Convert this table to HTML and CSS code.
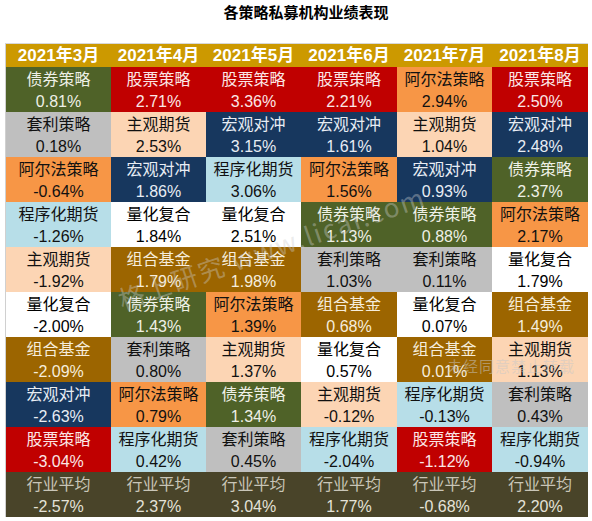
FILE: index.html
```html
<!DOCTYPE html>
<html>
<head>
    <meta charset="UTF-8">
    <title>各策略私募机构业绩表现</title>
    <link rel="stylesheet" href="styles.css">
</head>
<body>
    <div class="page">
        <h1 class="title">各策略私募机构业绩表现</h1>

        <div class="board">
            <!-- header -->
            <div class="head">2021年3月</div>
            <div class="head">2021年4月</div>
            <div class="head">2021年5月</div>
            <div class="head">2021年6月</div>
            <div class="head">2021年7月</div>
            <div class="head">2021年8月</div>

            <!-- row 1 -->
            <div class="cell bond"><span>债券策略</span><span>0.81%</span></div>
            <div class="cell stock"><span>股票策略</span><span>2.71%</span></div>
            <div class="cell stock"><span>股票策略</span><span>3.36%</span></div>
            <div class="cell stock"><span>股票策略</span><span>2.21%</span></div>
            <div class="cell alpha"><span>阿尔法策略</span><span>2.94%</span></div>
            <div class="cell stock"><span>股票策略</span><span>2.50%</span></div>

            <!-- row 2 -->
            <div class="cell arb"><span>套利策略</span><span>0.18%</span></div>
            <div class="cell subj"><span>主观期货</span><span>2.53%</span></div>
            <div class="cell macro"><span>宏观对冲</span><span>3.15%</span></div>
            <div class="cell macro"><span>宏观对冲</span><span>1.61%</span></div>
            <div class="cell subj"><span>主观期货</span><span>1.04%</span></div>
            <div class="cell macro"><span>宏观对冲</span><span>2.48%</span></div>

            <!-- row 3 -->
            <div class="cell alpha"><span>阿尔法策略</span><span>-0.64%</span></div>
            <div class="cell macro"><span>宏观对冲</span><span>1.86%</span></div>
            <div class="cell cta"><span>程序化期货</span><span>3.06%</span></div>
            <div class="cell alpha"><span>阿尔法策略</span><span>1.56%</span></div>
            <div class="cell macro"><span>宏观对冲</span><span>0.93%</span></div>
            <div class="cell bond"><span>债券策略</span><span>2.37%</span></div>

            <!-- row 4 -->
            <div class="cell cta"><span>程序化期货</span><span>-1.26%</span></div>
            <div class="cell quant"><span>量化复合</span><span>1.84%</span></div>
            <div class="cell quant"><span>量化复合</span><span>2.51%</span></div>
            <div class="cell bond"><span>债券策略</span><span>1.13%</span></div>
            <div class="cell bond"><span>债券策略</span><span>0.88%</span></div>
            <div class="cell alpha"><span>阿尔法策略</span><span>2.17%</span></div>

            <!-- row 5 -->
            <div class="cell subj"><span>主观期货</span><span>-1.92%</span></div>
            <div class="cell fof"><span>组合基金</span><span>1.79%</span></div>
            <div class="cell fof"><span>组合基金</span><span>1.98%</span></div>
            <div class="cell arb"><span>套利策略</span><span>1.03%</span></div>
            <div class="cell arb"><span>套利策略</span><span>0.11%</span></div>
            <div class="cell quant"><span>量化复合</span><span>1.79%</span></div>

            <!-- row 6 -->
            <div class="cell quant"><span>量化复合</span><span>-2.00%</span></div>
            <div class="cell bond"><span>债券策略</span><span>1.43%</span></div>
            <div class="cell alpha"><span>阿尔法策略</span><span>1.39%</span></div>
            <div class="cell fof"><span>组合基金</span><span>0.68%</span></div>
            <div class="cell quant"><span>量化复合</span><span>0.07%</span></div>
            <div class="cell fof"><span>组合基金</span><span>1.49%</span></div>

            <!-- row 7 -->
            <div class="cell fof"><span>组合基金</span><span>-2.09%</span></div>
            <div class="cell arb"><span>套利策略</span><span>0.80%</span></div>
            <div class="cell subj"><span>主观期货</span><span>1.37%</span></div>
            <div class="cell quant"><span>量化复合</span><span>0.57%</span></div>
            <div class="cell fof"><span>组合基金</span><span>0.01%</span></div>
            <div class="cell subj"><span>主观期货</span><span>1.13%</span></div>

            <!-- row 8 -->
            <div class="cell macro"><span>宏观对冲</span><span>-2.63%</span></div>
            <div class="cell alpha"><span>阿尔法策略</span><span>0.79%</span></div>
            <div class="cell bond"><span>债券策略</span><span>1.34%</span></div>
            <div class="cell subj"><span>主观期货</span><span>-0.12%</span></div>
            <div class="cell cta"><span>程序化期货</span><span>-0.13%</span></div>
            <div class="cell arb"><span>套利策略</span><span>0.43%</span></div>

            <!-- row 9 -->
            <div class="cell stock"><span>股票策略</span><span>-3.04%</span></div>
            <div class="cell cta"><span>程序化期货</span><span>0.42%</span></div>
            <div class="cell arb"><span>套利策略</span><span>0.45%</span></div>
            <div class="cell cta"><span>程序化期货</span><span>-2.04%</span></div>
            <div class="cell stock"><span>股票策略</span><span>-1.12%</span></div>
            <div class="cell cta"><span>程序化期货</span><span>-0.94%</span></div>

            <!-- industry average -->
            <div class="cell avg"><span>行业平均</span><span>-2.57%</span></div>
            <div class="cell avg"><span>行业平均</span><span>2.37%</span></div>
            <div class="cell avg"><span>行业平均</span><span>3.04%</span></div>
            <div class="cell avg"><span>行业平均</span><span>1.77%</span></div>
            <div class="cell avg"><span>行业平均</span><span>-0.68%</span></div>
            <div class="cell avg"><span>行业平均</span><span>2.20%</span></div>

            <!-- watermarks -->
            <div class="mark-main">格上研究 www.licai.com</div>
            <div class="mark-note">未经同意禁止转载</div>
        </div>
    </div>
</body>
</html>
```

FILE: styles.css
```css
body {
    margin: 0;
    background-color: #fff;
    font-family: "Liberation Sans", "Noto Sans CJK SC", sans-serif;
}

.page {
    width: 592px;
    height: 521px;
}

.title {
    margin: 0;
    height: 43px;
    padding-top: 2px;
    padding-left: 20px;
    box-sizing: border-box;
    font-family: "Noto Sans CJK SC", sans-serif;
    font-size: 15px;
    line-height: 20px;
    font-weight: bold;
    text-align: center;
    color: #000;
}

.board {
    position: relative;
    margin-left: 5px;
    display: grid;
    grid-template-columns: 105px 95px 95px 96px 95px 96px;
    grid-template-rows: 23px repeat(10, 45px);
    border-left: 1px solid #d0d0d0;
    border-top: 1px solid #d8d8d8;
    width: 582px;
}

.head {
    background-color: #cc9900;
    color: #fff;
    font-weight: bold;
    font-size: 17px;
    line-height: 23px;
    text-align: center;
}

.cell {
    display: flex;
    flex-direction: column;
    align-items: center;
    justify-content: center;
    padding-top: 3px;
    font-size: 16px;
    line-height: 22px;
}

/* strategy colours */
.bond  { background-color: #4f6228; color: #eef0e6; }
.stock { background-color: #c00000; color: #fbe6e6; }
.arb   { background-color: #bfbfbf; color: #111; }
.subj  { background-color: #fcd5b4; color: #111; }
.macro { background-color: #17375e; color: #e8edf4; }
.alpha { background-color: #f79646; color: #111; }
.cta   { background-color: #b7dee8; color: #111; }
.quant { background-color: #fff; color: #000; }
.fof   { background-color: #9c6500; color: #f6eddc; }
.avg   { background-color: #494429; color: #e4e2d8; }

.avg span:first-child {
    color: #c9c6b8;
}

/* watermark overlays */
.mark-main {
    position: absolute;
    left: 119px;
    top: 236px;
    font-family: "Noto Sans CJK SC", sans-serif;
    font-size: 26px;
    line-height: 38px;
    letter-spacing: 2px;
    color: rgba(205, 205, 205, 0.4);
    transform: rotate(-19deg);
    transform-origin: left bottom;
    white-space: nowrap;
    pointer-events: none;
}

.mark-note {
    position: absolute;
    left: 441px;
    top: 311px;
    font-family: "Noto Sans CJK SC", sans-serif;
    font-size: 15px;
    letter-spacing: 1px;
    color: rgba(200, 200, 200, 0.5);
    white-space: nowrap;
    pointer-events: none;
}
```
